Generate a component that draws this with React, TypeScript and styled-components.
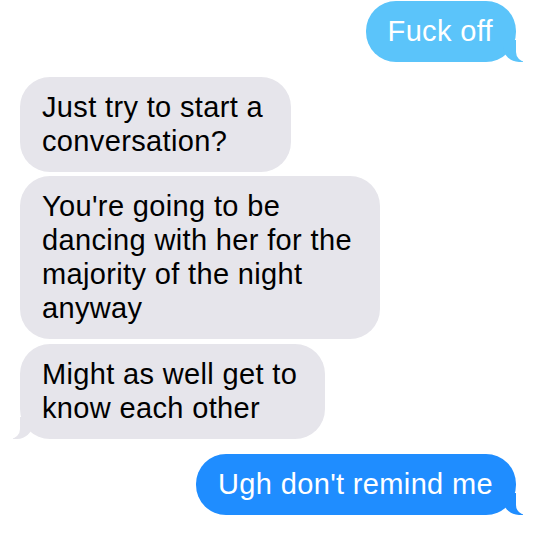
import React from "react";
import styled, { createGlobalStyle } from "styled-components";

const GlobalStyle = createGlobalStyle`
  html, body {
    margin: 0;
    padding: 0;
    background: #ffffff;
  }
`;

const Thread = styled.div`
  display: flex;
  flex-direction: column;
  width: 540px;
  height: 536px;
  box-sizing: border-box;
  padding: 1px 24px 0 20px;
  font-family: "Liberation Sans", Arial, sans-serif;
  overflow: hidden;
`;

const Bubble = styled.div<{ $out?: boolean; $light?: boolean; $tail?: boolean; $gap: number }>`
  position: relative;
  align-self: ${(p) => (p.$out ? "flex-end" : "flex-start")};
  margin-top: ${(p) => p.$gap}px;
  padding: 13px ${(p) => (p.$out ? 23 : 28)}px 14px 22px;
  border-radius: 30px;
  font-size: 29px;
  line-height: 34px;
  letter-spacing: 0.35px;
  white-space: nowrap;
  color: ${(p) => (p.$out ? "#ffffff" : "#000000")};
  background: ${(p) =>
    p.$out ? (p.$light ? "#5bc4fa" : "#1f8dff") : "#e6e5eb"};

  ${(p) =>
    p.$tail &&
    `
    &::before {
      content: "";
      position: absolute;
      bottom: 0;
      ${p.$out ? "right: -7px;" : "left: -7px;"}
      width: 20px;
      height: 22px;
      background: inherit;
      ${p.$out ? "border-bottom-left-radius: 16px;" : "border-bottom-right-radius: 16px;"}
    }
    &::after {
      content: "";
      position: absolute;
      bottom: 0;
      ${p.$out ? "right: -10px;" : "left: -10px;"}
      width: 10px;
      height: 22px;
      background: #ffffff;
      ${p.$out ? "border-bottom-left-radius: 10px;" : "border-bottom-right-radius: 10px;"}
    }
  `}
`;

export default function App() {
  return (
    <>
      <GlobalStyle />
      <Thread>
        <Bubble $out $light $tail $gap={0}>
          Fuck off
        </Bubble>
        <Bubble $gap={15}>
          Just try to start a
          <br />
          conversation?
        </Bubble>
        <Bubble $gap={4}>
          You're going to be
          <br />
          dancing with her for the
          <br />
          majority of the night
          <br />
          anyway
        </Bubble>
        <Bubble $tail $gap={5}>
          Might as well get to
          <br />
          know each other
        </Bubble>
        <Bubble $out $tail $gap={15}>
          Ugh don't remind me
        </Bubble>
      </Thread>
    </>
  );
}
